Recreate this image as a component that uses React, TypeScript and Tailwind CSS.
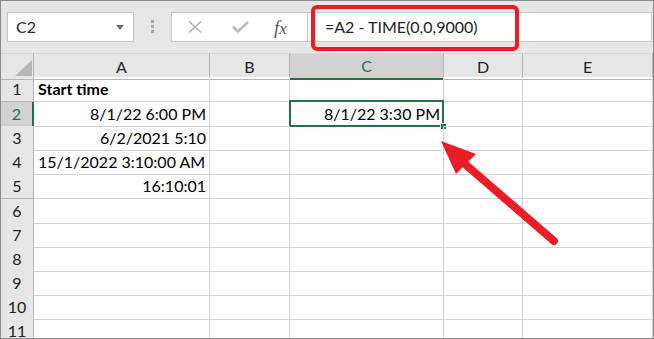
import React from 'react';

const cols = ['A', 'B', 'C', 'D', 'E'];
const colTemplate = 'grid grid-cols-[33px_176px_80px_154px_79px_1fr]';

type Cell = { text?: string; align?: 'left' | 'right'; bold?: boolean };

const rows: { h: string; cells: Cell[] }[] = [
  { h: 'h-[25px]', cells: [{ text: 'Start time', align: 'left', bold: true }] },
  { h: 'h-[24px]', cells: [{ text: '8/1/22 6:00 PM', align: 'right' }, {}, { text: '8/1/22 3:30 PM', align: 'right' }] },
  { h: 'h-[24px]', cells: [{ text: '6/2/2021 5:10', align: 'right' }] },
  { h: 'h-[24px]', cells: [{ text: '15/1/2022 3:10:00 AM', align: 'left' }] },
  { h: 'h-[25px]', cells: [{ text: '16:10:01', align: 'right' }] },
  { h: 'h-[24px]', cells: [] },
  { h: 'h-[24px]', cells: [] },
  { h: 'h-[24px]', cells: [] },
  { h: 'h-[24px]', cells: [] },
  { h: 'h-[24px]', cells: [] },
  { h: 'h-[24px]', cells: [] },
];

const Toolbar = () => (
  <div className="h-[52px] shrink-0 bg-[#e6e6e6] flex items-start pt-[11px] pl-[6px] pr-px">
    {/* name box */}
    <div className="w-[127px] h-[30px] bg-white border border-[#c6c6c6] flex items-center justify-between pl-[8px] pr-[9px]">
      <span className="text-[16px] text-[#1e2a3a]">C2</span>
      <svg width="8" height="5" viewBox="0 0 8 5">
        <polygon points="0,0 8,0 4,5" fill="#6d6d6d" />
      </svg>
    </div>
    {/* dots */}
    <div className="ml-[17px] mt-[8px] flex flex-col gap-[2px]">
      <div className="w-[3px] h-[3px] bg-[#a9a9a9]" />
      <div className="w-[3px] h-[3px] bg-[#a9a9a9]" />
      <div className="w-[3px] h-[3px] bg-[#a9a9a9]" />
    </div>
    {/* cancel / enter / fx */}
    <div className="ml-[17px] w-[137px] h-[30px] bg-white border border-[#c6c6c6] flex items-center pl-[15px] gap-[29px]">
      <svg width="16" height="12" viewBox="0 0 16 12">
        <path d="M2 0.5 L14 11.5 M14 0.5 L2 11.5" stroke="#b3b3b3" strokeWidth="1.6" fill="none" />
      </svg>
      <svg width="17" height="12" viewBox="0 0 17 12">
        <path d="M1 5.5 L6 10.5 L16 1" stroke="#bdbdbd" strokeWidth="2.6" fill="none" />
      </svg>
      <span className="font-['Liberation_Serif',serif] italic text-[19px] text-[#5a5a5a] -ml-[4px] leading-none">
        f<span className="text-[17px]">x</span>
      </span>
    </div>
    {/* formula input */}
    <div className="-ml-px flex-1 h-[30px] bg-white border border-[#c6c6c6] flex items-center pl-[17px]">
      <span className="text-[16px] text-[#222]">=A2 - TIME(0,0,9000)</span>
    </div>
  </div>
);

const HeaderRow = () => (
  <div className={`${colTemplate} h-[24px] shrink-0 bg-[#e6e6e6]`}>
    <div className="relative border-r border-b border-[#b5b5b5] border-t border-t-[#d8d8d8]">
      <svg className="absolute right-[1px] bottom-[3px]" width="17" height="16" viewBox="0 0 17 16">
        <polygon points="0,16 17,0 17,16" fill="#b7b7b7" />
      </svg>
    </div>
    {cols.map((c) =>
      c === 'C' ? (
        <div
          key={c}
          className="bg-[#d2d2d2] border-r border-[#b5b5b5] border-b-2 border-b-[#217346] border-t border-t-[#d8d8d8] flex items-center justify-center text-[16px] text-[#217346]"
        >
          {c}
        </div>
      ) : (
        <div
          key={c}
          className="border-r border-b border-[#b5b5b5] border-t border-t-[#d8d8d8] flex items-center justify-center text-[16px] text-[#222]"
        >
          {c}
        </div>
      )
    )}
  </div>
);

export default function App() {
  return (
    <div className="w-[654px] h-[339px] bg-white font-['Lato','Noto_Sans',sans-serif] overflow-hidden">
      <div className="relative w-[654px] h-[339px] border border-[#8a8a8a] overflow-hidden flex flex-col">
        <Toolbar />
        <HeaderRow />
        {rows.map((row, i) => (
          <div key={i} className={`${colTemplate} ${row.h} shrink-0`}>
            <div
              className={
                i === 1
                  ? 'bg-[#d2d2d2] border-r-2 border-r-[#217346] border-b border-[#b5b5b5] flex items-center justify-center text-[16px] text-[#217346]'
                  : 'bg-[#e6e6e6] border-r border-b border-[#b5b5b5] flex items-center justify-center text-[16px] text-[#222]'
              }
            >
              {i + 1}
            </div>
            {cols.map((c, j) => {
              const cell = row.cells[j] || {};
              const selected = i === 1 && c === 'C';
              return (
                <div
                  key={c}
                  className={`relative border-r border-b border-[#d4d4d4] flex items-center text-[16px] text-black whitespace-nowrap ${
                    cell.align === 'right' ? 'justify-end pr-[3px]' : 'justify-start pl-[4px]'
                  } ${cell.bold ? 'font-bold' : ''}`}
                >
                  {cell.text}
                  {selected && (
                    <>
                      <div className="absolute -left-px -top-[2px] -right-px -bottom-px border-2 border-[#217346]" />
                      <div className="absolute -right-[4px] -bottom-[4px] w-[7px] h-[7px] bg-[#217346] border border-white" />
                    </>
                  )}
                </div>
              );
            })}
          </div>
        ))}

        {/* annotation: red box around formula */}
        <div className="absolute left-[310px] top-[4px] w-[208px] h-[46px] border-[4px] border-[#ec1c24] rounded-[6px]" />

        {/* annotation: arrow */}
        <svg className="absolute left-[-1px] top-[-1px] pointer-events-none" width="654" height="339" viewBox="0 0 654 339">
          <line x1="465" y1="164" x2="554" y2="241" stroke="#ec1c24" strokeWidth="8" strokeLinecap="round" />
          <polygon points="441,141 476,154 456,174" fill="#ec1c24" />
        </svg>
      </div>
    </div>
  );
}
